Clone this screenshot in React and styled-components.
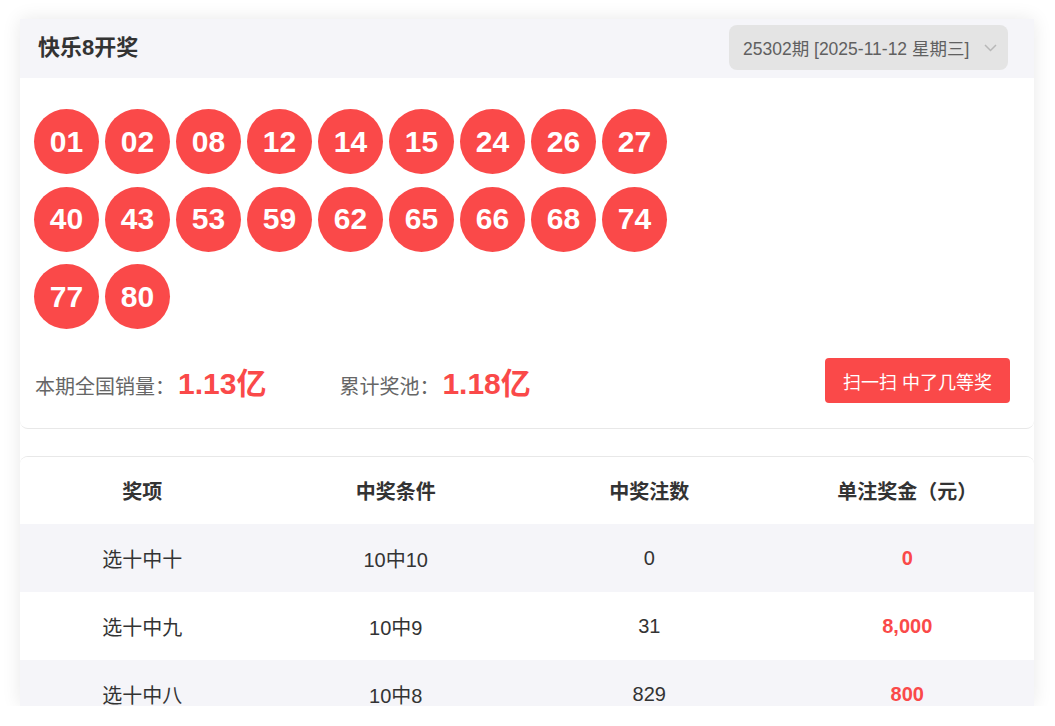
import React from "react";
import styled, { createGlobalStyle } from "styled-components";

const GlobalStyle = createGlobalStyle`
  html, body {
    margin: 0;
    background: #ffffff;
  }
  body {
    padding: 19px 21px 0 20px;
    font-family: "Liberation Sans", "Noto Sans CJK SC", sans-serif;
    color: #333333;
  }
`;

const RED = "#fa4949";

const balls = [
  "01", "02", "08", "12", "14", "15", "24", "26", "27",
  "40", "43", "53", "59", "62", "65", "66", "68", "74",
  "77", "80",
];

const prizes = [
  { name: "选十中十", rule: "10中10", count: "0", money: "0" },
  { name: "选十中九", rule: "10中9", count: "31", money: "8,000" },
  { name: "选十中八", rule: "10中8", count: "829", money: "800" },
];

export default function App() {
  return (
    <>
      <GlobalStyle />
      <Panel>
        <DrawCard>
          <Header>
            <Title>快乐8开奖</Title>
            <IssueSelect>
              <span>25302期 [2025-11-12 星期三]</span>
              <svg width="13" height="8" viewBox="0 0 13 8">
                <path d="M1 1l5.5 5.5L12 1" fill="none" stroke="#b8b8b8" strokeWidth="1.5" />
              </svg>
            </IssueSelect>
          </Header>
          <DrawBody>
            <BallGrid>
              {balls.map((b) => (
                <Ball key={b}>{b}</Ball>
              ))}
            </BallGrid>
            <StatsRow>
              <Stat>
                <StatLabel>本期全国销量：</StatLabel>
                <StatValue>1.13亿</StatValue>
              </Stat>
              <Stat>
                <StatLabel>累计奖池：</StatLabel>
                <StatValue>1.18亿</StatValue>
              </Stat>
              <ScanButton>扫一扫 中了几等奖</ScanButton>
            </StatsRow>
          </DrawBody>
        </DrawCard>

        <TableCard>
          <HeadRow>
            <HeadCell>奖项</HeadCell>
            <HeadCell>中奖条件</HeadCell>
            <HeadCell>中奖注数</HeadCell>
            <HeadCell>单注奖金（元）</HeadCell>
          </HeadRow>
          {prizes.map((p, i) => (
            <Row key={p.name} $striped={i % 2 === 0}>
              <Cell>{p.name}</Cell>
              <Cell>{p.rule}</Cell>
              <Cell>{p.count}</Cell>
              <Cell $money>{p.money}</Cell>
            </Row>
          ))}
        </TableCard>
      </Panel>
    </>
  );
}

const Panel = styled.div`
  width: 1014px;
  height: 687px;
  overflow: hidden;
  background: #ffffff;
  box-shadow: 0 0 18px rgba(0, 0, 0, 0.09);
`;

const DrawCard = styled.section`
  border-bottom: 1px solid #e8e8e8;
  border-radius: 0 0 8px 8px;
  background: #ffffff;
`;

const Header = styled.div`
  height: 59px;
  display: flex;
  align-items: center;
  justify-content: space-between;
  padding: 0 26px 0 18px;
  background: #f5f5f9;
`;

const Title = styled.h1`
  margin: 0 0 2px;
  font-size: 22px;
  line-height: 1;
  font-weight: 700;
  color: #333333;
`;

const IssueSelect = styled.div`
  height: 45px;
  width: 279px;
  box-sizing: border-box;
  display: flex;
  align-items: center;
  justify-content: space-between;
  padding: 0 11px 0 14px;
  margin-bottom: 2px;
  border-radius: 8px;
  background: #e4e4e4;
  color: #606060;
  font-size: 17.5px;
`;

const DrawBody = styled.div`
  padding: 31px 24px 25px 14px;
`;

const BallGrid = styled.div`
  display: grid;
  grid-template-columns: repeat(9, 65px);
  column-gap: 6px;
  row-gap: 12.5px;
`;

const Ball = styled.div`
  width: 65px;
  height: 65px;
  border-radius: 50%;
  background: ${RED};
  color: #ffffff;
  font-size: 30px;
  font-weight: 700;
  display: flex;
  align-items: center;
  justify-content: center;
`;

const StatsRow = styled.div`
  display: flex;
  align-items: center;
  margin-top: 29px;
`;

const Stat = styled.div`
  display: flex;
  align-items: baseline;
  margin-right: 72px;
`;

const StatLabel = styled.span`
  font-size: 20px;
  color: #666666;
  margin-left: 1px;
`;

const StatValue = styled.span`
  font-size: 30px;
  font-weight: 700;
  color: ${RED};
  margin-left: 3px;
`;

const ScanButton = styled.button`
  margin-left: auto;
  height: 45px;
  width: 185px;
  border: none;
  border-radius: 4px;
  background: ${RED};
  color: #ffffff;
  font-family: inherit;
  font-size: 18px;
  cursor: pointer;
`;

const TableCard = styled.section`
  margin-top: 27px;
  border-top: 1px solid #e8e8e8;
  border-radius: 8px 8px 0 0;
  overflow: hidden;
`;

const HeadRow = styled.div`
  display: grid;
  grid-template-columns: repeat(4, 1fr);
  height: 67px;
  align-items: center;
  background: #ffffff;
`;

const HeadCell = styled.div`
  text-align: center;
  font-size: 20px;
  font-weight: 700;
  color: #333333;

  &:not(:last-child) {
    padding-right: 9px;
  }
`;

const Row = styled.div`
  display: grid;
  grid-template-columns: repeat(4, 1fr);
  height: 68px;
  align-items: center;
  background: ${(p) => (p.$striped ? "#f5f5f9" : "#ffffff")};
`;

const Cell = styled.div`
  text-align: center;
  font-size: 20px;
  font-weight: ${(p) => (p.$money ? 700 : 400)};
  color: ${(p) => (p.$money ? RED : "#333333")};

  &:not(:last-child) {
    padding-right: 9px;
  }
`;
